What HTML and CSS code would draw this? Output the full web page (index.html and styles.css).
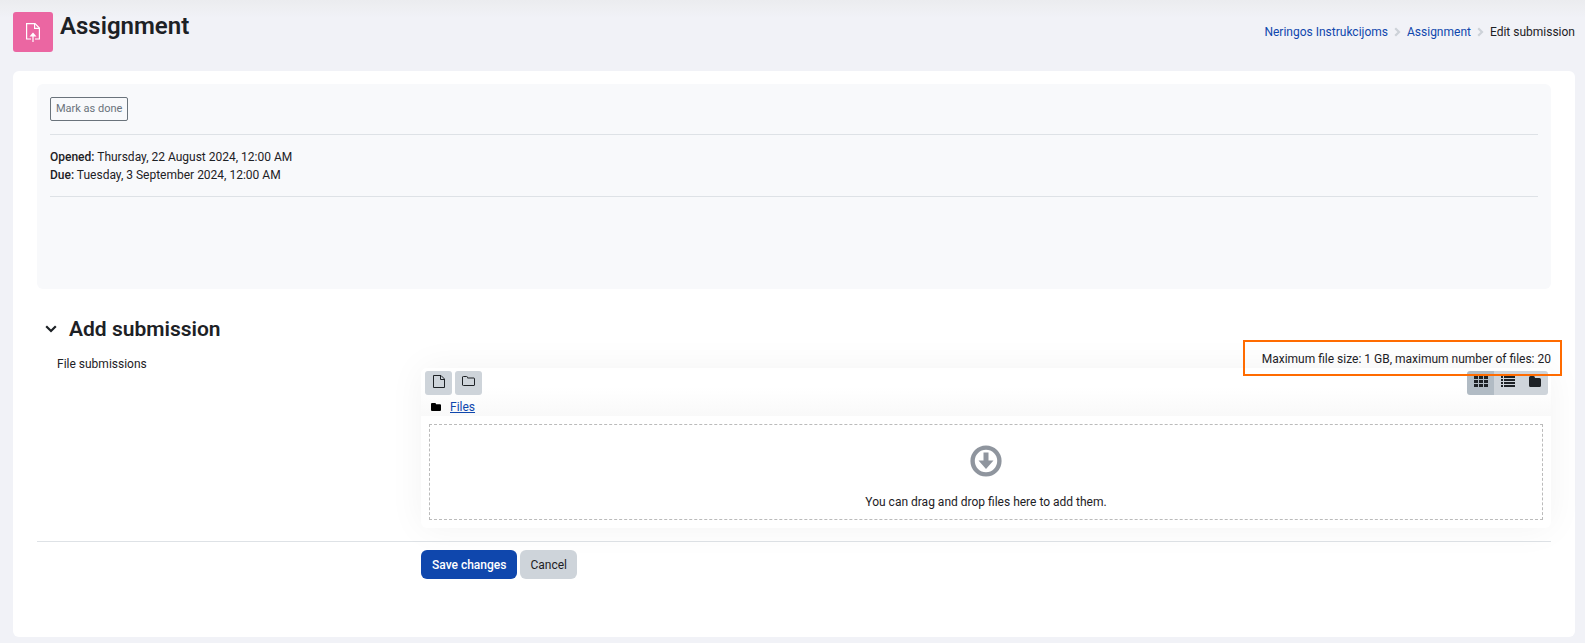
FILE: index.html
```html
<!DOCTYPE html>
<html lang="en">
<head>
    <meta charset="UTF-8">
    <meta name="viewport" content="width=device-width, initial-scale=1.0">
    <title>Edit submission</title>
    <link rel="stylesheet" href="styles.css">
</head>
<body>
    <header class="page-header">
        <div class="page-title">
            <span class="activity-icon">
                <svg width="16" height="20" viewBox="0 0 16 20" fill="none" stroke="#fff" stroke-width="1.2">
                    <path d="M6 17H1.600V1.600H10L14.400 6V17H10"/>
                    <path d="M9.600 1.600V6.400H14.400"/>
                    <path d="M8 20V13"/>
                    <path d="M5.800 14L8 11.500L10.200 14Z" fill="#fff"/>
                </svg>
            </span>
            <h1>Assignment</h1>
        </div>
        <nav class="breadcrumb" aria-label="Breadcrumb">
            <a href="#">Neringos Instrukcijoms</a>
            <svg width="7" height="10" viewBox="0 0 7 10"><path d="M1.200 1.200L5 5L1.200 8.800" fill="none" stroke="#cdd2d8" stroke-width="2.200"/></svg>
            <a href="#">Assignment</a>
            <svg width="7" height="10" viewBox="0 0 7 10"><path d="M1.200 1.200L5 5L1.200 8.800" fill="none" stroke="#cdd2d8" stroke-width="2.200"/></svg>
            <span>Edit submission</span>
        </nav>
    </header>

    <main class="card">
        <section class="activity-info">
            <button type="button" class="btn-done">Mark as done</button>
            <div class="dates">
                <div><strong>Opened:</strong> Thursday, 22 August 2024, 12:00 AM</div>
                <div><strong>Due:</strong> Tuesday, 3 September 2024, 12:00 AM</div>
            </div>
        </section>

        <form class="submission">
            <div class="section-head">
                <button type="button" class="collapse-btn" aria-label="Collapse">
                    <svg width="12" height="8" viewBox="0 0 12 8"><path d="M1.200 1.200L6 6L10.800 1.200" fill="none" stroke="#1d2125" stroke-width="2.200"/></svg>
                </button>
                <h2>Add submission</h2>
            </div>

            <div class="form-row">
                <div class="form-label">File submissions</div>
                <div class="form-field">
                    <div class="restrictions">
                        <span class="highlight">Maximum file size: 1 GB, maximum number of files: 20</span>
                    </div>
                    <div class="filemanager">
                        <div class="fm-toolbar">
                            <div class="fm-buttons">
                                <div class="fm-actions">
                                    <button type="button" class="fm-btn" aria-label="Add file">
                                        <svg width="12" height="14" viewBox="0 0 12 14" fill="none" stroke="#1d2125"><path d="M.5 .5H8L11.500 4V12.500H.5Z"/><path d="M7.500 .5V4.500H11.500"/></svg>
                                    </button>
                                    <button type="button" class="fm-btn" aria-label="Create folder">
                                        <svg width="14" height="14" viewBox="0 0 14 14" fill="none" stroke="#1d2125"><path d="M1.500 1.500H4.500Q5.500 1.500 5.500 2.500V3H12Q12.500 3 12.500 4V10Q12.500 10.500 12 10.500H1.500Q.5 10.500 .5 10V2Q.5 1.500 1.500 1.500Z"/></svg>
                                    </button>
                                </div>
                                <div class="fm-views">
                                    <button type="button" class="fm-btn active" aria-label="Display folder with file icons">
                                        <svg width="14" height="12" viewBox="0 0 14 12" fill="#1d2125"><path d="M0 0H4V3H0ZM5 0H9V3H5ZM10 0H14V3H10ZM0 4H4V7H0ZM5 4H9V7H5ZM10 4H14V7H10ZM0 8H4V11H0ZM5 8H9V11H5ZM10 8H14V11H10Z"/></svg>
                                    </button>
                                    <button type="button" class="fm-btn" aria-label="Display folder with file details">
                                        <svg width="14" height="12" viewBox="0 0 14 12" fill="#1d2125"><path d="M0 0H2V2H0ZM3 0H14V2H3ZM0 3H2V5H0ZM3 3H14V5H3ZM0 6H2V8H0ZM3 6H14V8H3ZM0 9H2V11H0ZM3 9H14V11H3Z"/></svg>
                                    </button>
                                    <button type="button" class="fm-btn" aria-label="Display folder as file tree">
                                        <svg width="12" height="12" viewBox="0 0 12 12" fill="#1d2125"><path d="M1.500 0H4.500Q6 0 6 2H10.500Q12 2 12 3.500V9.500Q12 11 10.500 11H1.500Q0 11 0 9.500V1.500Q0 0 1.500 0Z"/></svg>
                                    </button>
                                </div>
                            </div>
                            <div class="fm-path">
                                <svg width="10" height="10" viewBox="0 0 10 10"><path d="M1 1H4Q5 1 5 2.200H9Q10 2.200 10 3.200V8Q10 9 9 9H1Q0 9 0 8V2Q0 1 1 1Z"/></svg>
                                <a href="#">Files</a>
                            </div>
                        </div>
                        <div class="dropzone">
                            <svg width="32" height="32" viewBox="0 0 32 32"><circle cx="16" cy="16" r="13.400" fill="none" stroke="#8f959e" stroke-width="4.400"/><path d="M13.500 7.500H18.500V15.500H23.500L16 24L8.500 15.500H13.500Z" fill="#8f959e"/></svg>
                            <p>You can drag and drop files here to add them.</p>
                        </div>
                    </div>
                </div>
            </div>

            <div class="form-actions">
                <button type="submit" class="btn btn-primary">Save changes</button>
                <button type="button" class="btn btn-secondary">Cancel</button>
            </div>
        </form>
    </main>
</body>
</html>
```
FILE: styles.css
```css
* {
    box-sizing: border-box;
}

body {
    margin: 0;
    padding: 12px 10px 6px 13px;
    min-height: 100vh;
    display: flex;
    flex-direction: column;
    background: #f1f2f7 linear-gradient(#ebecef, #f1f2f7) no-repeat 0 0 / 100% 18px;
    font-family: Roboto, "Liberation Sans", sans-serif;
    font-size: 12px;
    line-height: 18px;
    color: #1d2125;
}

h1, h2, p {
    margin: 0;
}

a {
    color: #0f47ad;
}

button {
    font-family: inherit;
    font-size: 12px;
    line-height: 18px;
    color: #1d2125;
    cursor: pointer;
}

svg {
    display: block;
    flex: none;
}

.page-header {
    display: flex;
    justify-content: space-between;
    align-items: flex-start;
    padding-bottom: 19px;
}

.page-title {
    display: flex;
    gap: 7px;
}

.page-title h1 {
    font-size: 24px;
    line-height: 28px;
    font-weight: 600;
}

.activity-icon {
    width: 40px;
    height: 40px;
    display: flex;
    align-items: center;
    justify-content: center;
    border-radius: 3px;
    background: #eb66a2;
}

.breadcrumb {
    display: flex;
    align-items: center;
    gap: 6px;
    padding-top: 11px;
}

.breadcrumb a {
    text-decoration: none;
}

.card {
    flex: 1;
    padding: 13px 24px;
    border-radius: 6px;
    background: #fff;
}

.activity-info {
    min-height: 205px;
    padding: 13px;
    border-radius: 6px;
    background: #f8f9fb;
}

.btn-done {
    display: block;
    height: 24px;
    padding: 0 5px;
    border: 1px solid #6a737b;
    border-radius: 2px;
    background: transparent;
    color: #6a737b;
    font-size: 11px;
    line-height: 22px;
}

.dates {
    margin-top: 13px;
    padding: 13px 0 12px;
    border-top: 1px solid #dee2e6;
    border-bottom: 1px solid #dee2e6;
}

.dates strong {
    font-weight: 500;
}

.section-head {
    display: flex;
    align-items: center;
    gap: 4px;
    margin-top: 28px;
}

.section-head h2 {
    font-size: 21px;
    line-height: 24px;
    font-weight: 600;
}

.collapse-btn {
    width: 28px;
    height: 24px;
    padding: 0;
    display: flex;
    align-items: center;
    justify-content: center;
    border: 0;
    background: none;
}

.form-row {
    display: flex;
    padding-bottom: 13px;
    border-bottom: 1px solid #dee2e6;
}

.form-label {
    flex: 0 0 384px;
    padding: 14px 20px;
}

.form-field {
    flex: 1;
    min-width: 0;
}

.restrictions {
    padding-top: 9px;
    text-align: right;
}

.highlight {
    position: relative;
    z-index: 1;
}

/* frame drawn around the upload limits */
.highlight::after {
    content: "";
    position: absolute;
    inset: -12px -11px -10px -19px;
    border: 2px solid #ff6b00;
    pointer-events: none;
}

.filemanager {
    display: flow-root;
    border-radius: 6px;
    background: #fff;
    box-shadow: 0 0 36px rgba(0, 0, 0, 0.05);
}

.fm-toolbar {
    padding: 3px 3px 0 4px;
    border-radius: 6px 6px 0 0;
    background: linear-gradient(#fff 40%, #f9f9f9);
}

.fm-buttons {
    display: flex;
    justify-content: space-between;
}

.fm-actions {
    display: flex;
    gap: 3px;
}

.fm-views {
    display: flex;
    border-radius: 3px;
    overflow: hidden;
}

.fm-btn {
    width: 27px;
    height: 24px;
    padding: 0 0 3px;
    display: flex;
    align-items: center;
    justify-content: center;
    border: 0;
    background: #ced4da;
}

.fm-actions .fm-btn {
    border-radius: 3px;
}

.fm-btn.active {
    background: #b1bbc4;
}

.fm-path {
    display: flex;
    align-items: center;
    gap: 9px;
    padding: 3px 6px 0;
}

.dropzone {
    margin: 8px;
    height: 96px;
    padding-top: 20px;
    display: flex;
    flex-direction: column;
    align-items: center;
    gap: 16px;
    border: 1px dashed #bbb;
}

.form-actions {
    display: flex;
    gap: 3px;
    padding: 8px 0 0 384px;
}

.btn {
    height: 29px;
    padding: 0 11px;
    border: 0;
    border-radius: 6px;
}

.btn-primary {
    background: #0f47ad;
    color: #fff;
    font-weight: 500;
}

.btn-secondary {
    padding: 0 10px;
    background: #ced4da;
}
```
